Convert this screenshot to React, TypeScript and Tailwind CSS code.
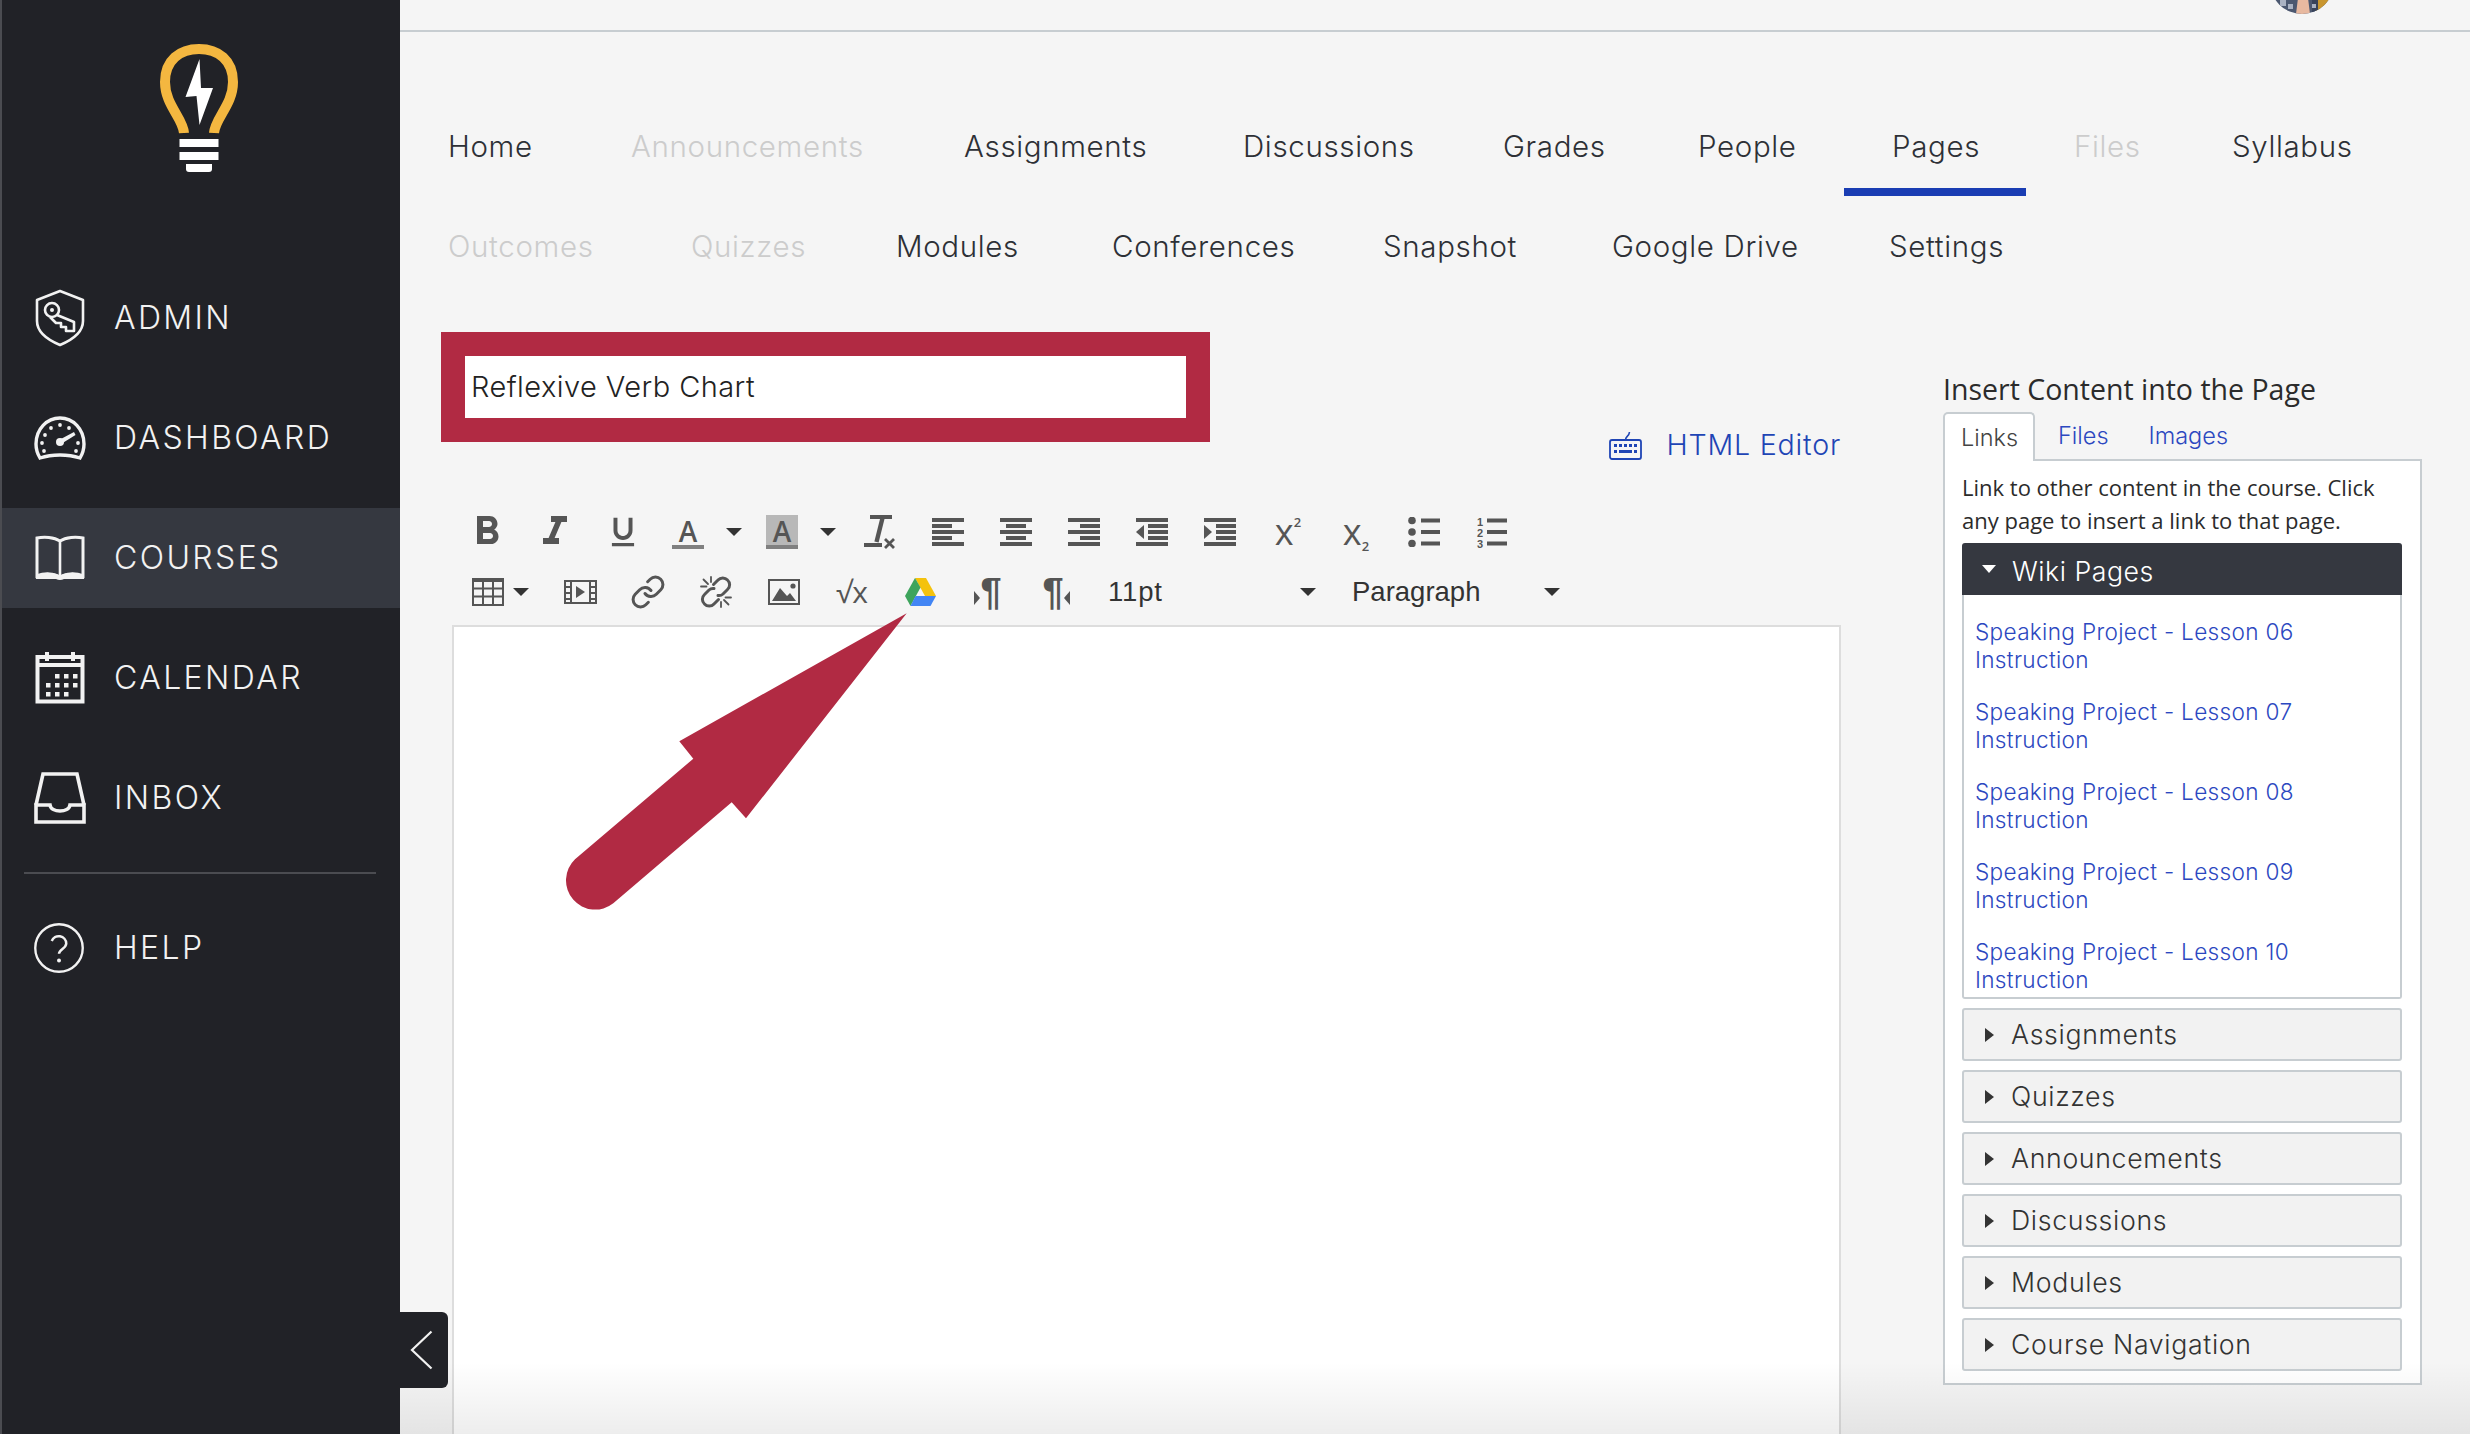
import React from "react";
import { Link } from "lucide-react";
import { MdFormatBold, MdFormatItalic, MdFormatUnderlined } from "react-icons/md";

const navRow1 = [
  { label: "Home", width: "w-[183px]" },
  { label: "Announcements", width: "w-[333px]", disabled: true },
  { label: "Assignments", width: "w-[279px]" },
  { label: "Discussions", width: "w-[260px]" },
  { label: "Grades", width: "w-[195px]" },
  { label: "People", width: "w-[194px]" },
  { label: "Pages", width: "w-[182px]", active: true },
  { label: "Files", width: "w-[158px]", disabled: true },
  { label: "Syllabus", width: "w-[220px]" },
];

const navRow2 = [
  { label: "Outcomes", width: "w-[243px]", disabled: true },
  { label: "Quizzes", width: "w-[205px]", disabled: true },
  { label: "Modules", width: "w-[216px]" },
  { label: "Conferences", width: "w-[271px]" },
  { label: "Snapshot", width: "w-[229px]" },
  { label: "Google Drive", width: "w-[277px]" },
  { label: "Settings", width: "w-[220px]" },
];

const wikiLinks = ["06", "07", "08", "09", "10"];
const accordions = ["Assignments", "Quizzes", "Announcements", "Discussions", "Modules", "Course Navigation"];

const LogoBulb = () => (
  <svg width="80" height="132" viewBox="0 0 80 132" className="block">
    <path
      d="M25 89 C24 74 6 61 6 38 C6 16 21 5 40 5 C59 5 74 16 74 38 C74 61 56 74 55 89"
      fill="none"
      stroke="#f4b740"
      strokeWidth="10"
    />
    <polygon points="40.5,15 26.5,53 37.5,52 40.5,81 54,44 42,44" fill="#fff" />
    <rect x="20.5" y="95" width="39" height="8" fill="#fff" />
    <rect x="20.5" y="108" width="39" height="8" fill="#fff" />
    <path d="M27 120 H53 V125 Q53 128 50 128 H30 Q27 128 27 125 Z" fill="#fff" />
  </svg>
);

const AdminIcon = () => (
  <svg width="52" height="58" viewBox="0 0 52 58" className="block" fill="none" stroke="#f2f2f2">
    <path d="M26 2 L49 11 V32 C49 43 38 51 26 56 C14 51 3 43 3 32 V11 Z" strokeWidth="2.6" strokeLinejoin="round" />
    <circle cx="18" cy="21" r="7" strokeWidth="2.6" />
    <circle cx="18" cy="21" r="2" fill="#f2f2f2" stroke="none" />
    <path d="M23 26 L40 33 V42 H32 V38 H27 V34 H22 L16 28" strokeWidth="2.6" strokeLinejoin="round" />
  </svg>
);

const DashboardIcon = () => (
  <svg width="52" height="44" viewBox="0 0 52 44" className="block" fill="#f2f2f2">
    <path
      d="M6 42 C3 37 2 33 2 28 C2 13 13 2 26 2 C39 2 50 13 50 28 C50 33 49 37 46 42 C34 38 18 38 6 42 Z"
      fill="none"
      stroke="#f2f2f2"
      strokeWidth="3.4"
    />
    <circle cx="26" cy="9" r="1.9" />
    <circle cx="17" cy="12" r="1.9" />
    <circle cx="35" cy="12" r="1.9" />
    <circle cx="11" cy="19" r="1.9" />
    <circle cx="8" cy="27" r="1.9" />
    <circle cx="44" cy="27" r="1.9" />
    <circle cx="10" cy="35" r="1.9" />
    <circle cx="42" cy="35" r="1.9" />
    <circle cx="26" cy="26" r="4" />
    <path d="M25 24 L40 16 L41.5 19 L27 28 Z" />
  </svg>
);

const CoursesIcon = () => (
  <svg width="52" height="46" viewBox="0 0 52 46" className="block" fill="none" stroke="#f2f2f2">
    <path d="M26 6 C20 2 10 1.5 3 3 V41 C10 38 20 38 26 42 C32 38 42 38 49 41 V3 C42 1.5 32 2 26 6 Z" strokeWidth="3" />
    <path d="M26 6 V42" strokeWidth="2.6" />
    <path d="M2 40 V44 H22 Q26 46 30 44 H50 V40 C42 37 32 37 26 41 C20 37 10 37 2 40 Z" fill="#f2f2f2" stroke="none" />
  </svg>
);

const CalendarIcon = () => {
  const dots = [
    [20, 22], [29, 22], [38, 22],
    [11, 31], [20, 31], [29, 31], [38, 31],
    [11, 40], [20, 40], [29, 40],
  ];
  return (
    <svg width="50" height="52" viewBox="0 0 50 52" className="block" fill="#f2f2f2">
      <path d="M2.5 5 H47.5 V49.5 H2.5 Z M2.5 13 H47.5" fill="none" stroke="#f2f2f2" strokeWidth="4" />
      <rect x="10" y="0" width="4" height="9" />
      <rect x="36" y="0" width="4" height="9" />
      {dots.map(([x, y]) => (
        <rect key={`${x}-${y}`} x={x} y={y} width="4.5" height="4.5" />
      ))}
    </svg>
  );
};

const InboxIcon = () => (
  <svg width="52" height="52" viewBox="0 0 52 52" className="block" fill="none" stroke="#f2f2f2" strokeWidth="3.6">
    <path d="M2 33 L9 2 H43 L50 33" />
    <path d="M2 50 V33 H16 C17 41 35 41 36 33 H50 V50 Z" />
  </svg>
);

const HelpIcon = () => (
  <svg width="50" height="50" viewBox="2 2 20 20" className="block" fill="none" stroke="#f2f2f2" strokeWidth="0.95">
    <circle cx="12" cy="12" r="9.5" />
    <path d="M9.1 9.2a3 3 0 0 1 5.8 1c0 2-2.9 2.3-2.9 4.1" strokeWidth="1" />
    <circle cx="12" cy="17" r="0.8" fill="#f2f2f2" stroke="none" />
  </svg>
);

const sideItems = [
  { label: "ADMIN", icon: <AdminIcon /> },
  { label: "DASHBOARD", icon: <DashboardIcon /> },
  { label: "COURSES", icon: <CoursesIcon />, active: true },
  { label: "CALENDAR", icon: <CalendarIcon /> },
  { label: "INBOX", icon: <InboxIcon /> },
];

const Sidebar = () => (
  <aside className="w-[400px] shrink-0 h-full bg-[#212227] border-l-2 border-l-[#4b4c51] flex flex-col text-[#f2f2f2]">
    <div className="h-[268px] pt-[44px] pl-[157px]">
      <LogoBulb />
    </div>
    <div className="flex flex-col gap-[20px]">
      {sideItems.map((item) => (
        <div
          key={item.label}
          className={`h-[100px] flex items-center pl-[32px] ${item.active ? "bg-[#353840]" : ""}`}
        >
          <div className="w-[52px] flex justify-center">{item.icon}</div>
          <span className="ml-[28px] pb-[1px] text-[32px] font-light tracking-[0.075em]">{item.label}</span>
        </div>
      ))}
    </div>
    <div className="h-[2px] bg-[#4b4c51] mt-[24px] ml-[22px] w-[352px]" />
    <div className="h-[100px] mt-[24px] flex items-center pl-[32px]">
      <div className="w-[52px] flex justify-start">
        <HelpIcon />
      </div>
      <span className="ml-[28px] pb-[1px] text-[32px] font-light tracking-[0.075em]">HELP</span>
    </div>
  </aside>
);

const NavRow = ({ items }: { items: typeof navRow1 }) => (
  <div className="flex h-[100px]">
    {items.map((item) => (
      <div
        key={item.label}
        className={`h-full flex items-center pl-[48px] text-[29.5px] font-[350] tracking-[0.022em] border-y-8 border-t-transparent ${item.width} ${
          item.active ? "border-b-[#1a3db3]" : "border-b-transparent"
        } ${item.disabled ? "text-[#cccccc]" : "text-[#2d3036]"}`}
      >
        {item.label}
      </div>
    ))}
  </div>
);

// toolbar cell, fixed width so the icons stay on the 68px grid
const Cell = ({ className, children }: { className: string; children?: React.ReactNode }) => (
  <div className={`h-full flex items-center justify-center shrink-0 ${className}`}>{children}</div>
);

const Caret = () => (
  <span className="block w-0 h-0 border-x-[8px] border-x-transparent border-t-[8px] border-t-[#333333]" />
);

const AlignIcon = ({ xs }: { xs: [number, number][] }) => (
  <svg width="32" height="28" viewBox="0 0 32 28" className="block" fill="#555555">
    {xs.map(([x, w], i) => (
      <rect key={i} x={x} y={i * 6} width={w} height="4" />
    ))}
  </svg>
);

const IndentIcon = ({ out }: { out?: boolean }) => (
  <svg width="32" height="28" viewBox="0 0 32 28" className="block" fill="#555555">
    <rect x="0" y="0" width="32" height="4" />
    <rect x="12" y="6" width="20" height="4" />
    <rect x="12" y="12" width="20" height="4" />
    <rect x="12" y="18" width="20" height="4" />
    <rect x="0" y="24" width="32" height="4" />
    {out ? <polygon points="8,7 8,21 0,14" /> : <polygon points="0,7 0,21 8,14" />}
  </svg>
);

const ClearIcon = () => (
  <svg width="32" height="34" viewBox="0 0 32 34" className="block" fill="#555555" stroke="#555555">
    <rect x="6" y="0" width="22" height="4" stroke="none" />
    <path d="M18.5 3 L12.5 27" strokeWidth="4.4" fill="none" />
    <rect x="0" y="28" width="18" height="4" stroke="none" />
    <path d="M21 24 L30 33 M30 24 L21 33" strokeWidth="2.8" fill="none" />
  </svg>
);

const BulletIcon = () => (
  <svg width="32" height="30" viewBox="0 0 32 30" className="block" fill="#555555">
    {[3.5, 15, 26.5].map((y) => (
      <g key={y}>
        <circle cx="4" cy={y} r="3.8" />
        <rect x="13" y={y - 2} width="19" height="4" />
      </g>
    ))}
  </svg>
);

const NumberIcon = () => (
  <div className="relative w-[30px] h-[30px]">
    <div className="w-[8px] flex flex-col text-[11px] leading-[11px] font-bold text-[#555555] font-['Liberation_Sans',sans-serif]">
      <span>1</span>
      <span>2</span>
      <span>3</span>
    </div>
    <svg width="20" height="30" viewBox="0 0 20 30" className="absolute left-[10px] top-0 block" fill="#555555">
      {[1.5, 13, 24.5].map((y) => (
        <rect key={y} x="0" y={y} width="20" height="4" />
      ))}
    </svg>
  </div>
);

const TableIcon = () => (
  <svg width="32" height="28" viewBox="0 0 32 28" className="block" fill="none" stroke="#555555" strokeWidth="2">
    <rect x="1" y="1" width="30" height="26" />
    <rect x="0" y="0" width="32" height="4" fill="#555555" stroke="none" />
    <path d="M11 3 V27 M21 3 V27 M1 10.5 H31 M1 18.5 H31" />
  </svg>
);

const MediaIcon = () => (
  <svg width="33" height="24" viewBox="0 0 33 24" className="block" fill="#555555">
    <path d="M0 0 H33 V24 H0 Z M2 2 V6 H6 V2 Z M2 8 V12 H6 V8 Z M2 14 V18 H6 V14 Z M2 20 V22 H6 V20 Z M27 2 V6 H31 V2 Z M27 8 V12 H31 V8 Z M27 14 V18 H31 V14 Z M27 20 V22 H31 V20 Z M8 2 V22 H25 V2 Z" fillRule="evenodd" />
    <polygon points="12,6 21,12 12,18" />
  </svg>
);

const UnlinkIcon = () => (
  <svg width="32" height="32" viewBox="0 0 32 32" className="block" fill="none" stroke="#555555" strokeLinecap="round">
    <path d="M13.5 8.5 L18 4 a6.4 6.4 0 0 1 9.5 0 a6.4 6.4 0 0 1 0 9.5 L23 18 a6 6 0 0 1 -5 1.5" strokeWidth="3" />
    <path d="M18.5 23.5 L14 28 a6.4 6.4 0 0 1 -9.5 0 a6.4 6.4 0 0 1 0 -9.5 L9 14 a6 6 0 0 1 5 -1.5" strokeWidth="3" />
    <path d="M1 10.5 H6.5 M3.5 3.5 L8 8 M11 1 V6 M31 21.5 H25.5 M28.5 28.5 L24 24 M21 31 V26" strokeWidth="1.8" />
  </svg>
);

const ImageIcon = () => (
  <svg width="32" height="26" viewBox="0 0 32 26" className="block" fill="#555555">
    <path d="M0 0 H32 V26 H0 Z M2 2 V24 H30 V2 Z" fillRule="evenodd" />
    <polygon points="4,22 12,9 19,17 22,14 28,22" />
    <circle cx="25" cy="7" r="2.6" />
  </svg>
);

const DriveIcon = () => (
  <svg width="31" height="28" viewBox="0 0 31 28" className="block">
    <polygon points="10,0 21,0 31,18 20,18" fill="#f4c20d" />
    <polygon points="10,0 15.5,9.5 5.5,28 0,18" fill="#3da45c" />
    <polygon points="10.5,18 31,18 25.5,28 5.5,28" fill="#4285f4" />
  </svg>
);

const PilcrowIcon = ({ rtl }: { rtl?: boolean }) => (
  <div className={`h-[38px] flex items-end gap-[0px] ${rtl ? "flex-row-reverse" : ""}`}>
    <span className={`block w-0 h-0 mb-[6px] border-y-[7px] border-y-transparent ${rtl ? "border-r-[6px] border-r-[#555555]" : "border-l-[6px] border-l-[#555555]"}`} />
    <span className="text-[#555555] text-[38px] leading-[38px] font-bold font-['Liberation_Sans',sans-serif]">¶</span>
  </div>
);

const KeyboardIcon = () => (
  <svg width="33" height="29" viewBox="0 0 33 29" className="block" fill="#1f45b5">
    <rect x="1" y="9" width="31" height="19" rx="2" fill="none" stroke="#1f45b5" strokeWidth="1.8" />
    <path d="M16.5 9 C16.5 5 20 6 20.5 1" fill="none" stroke="#1f45b5" strokeWidth="1.6" />
    {[6, 11, 16, 21, 26].map((x) => (
      <rect key={x} x={x - 1} y="13" width="3" height="3" />
    ))}
    <rect x="5" y="19" width="3" height="3" />
    <rect x="10" y="19" width="13" height="3" />
    <rect x="25" y="19" width="3" height="3" />
  </svg>
);

const EditorToolbar = () => (
  <div className="ml-[12px] flex flex-col">
    <div className="h-[60px] flex items-center">
      <Cell className="w-[68px]">
        <MdFormatBold size={48} color="#555555" />
      </Cell>
      <Cell className="w-[68px]">
        <MdFormatItalic size={48} color="#555555" />
      </Cell>
      <Cell className="w-[68px]">
        <MdFormatUnderlined size={38} color="#555555" />
      </Cell>
      <Cell className="w-[62px]">
        <span className="w-[32px] h-[34px] border-b-4 border-b-[#808080] flex justify-center text-[#555555] text-[28px] leading-[32px] font-semibold font-['Open_Sans',sans-serif]">
          A
        </span>
      </Cell>
      <Cell className="w-[30px]">
        <Caret />
      </Cell>
      <Cell className="w-[66px]">
        <span className="w-[32px] h-[34px] bg-[#b8b8b8] border-b-4 border-b-[#808080] flex justify-center text-[#555555] text-[28px] leading-[32px] font-semibold font-['Open_Sans',sans-serif]">
          A
        </span>
      </Cell>
      <Cell className="w-[31px] !justify-start pl-[5px]">
        <Caret />
      </Cell>
      <Cell className="w-[68px]">
        <ClearIcon />
      </Cell>
      <Cell className="w-[68px]">
        <AlignIcon xs={[[0, 32], [0, 20], [0, 32], [0, 20], [0, 32]]} />
      </Cell>
      <Cell className="w-[68px]">
        <AlignIcon xs={[[0, 32], [6, 20], [0, 32], [6, 20], [0, 32]]} />
      </Cell>
      <Cell className="w-[68px]">
        <AlignIcon xs={[[0, 32], [12, 20], [0, 32], [12, 20], [0, 32]]} />
      </Cell>
      <Cell className="w-[68px]">
        <IndentIcon out />
      </Cell>
      <Cell className="w-[68px]">
        <IndentIcon />
      </Cell>
      <Cell className="w-[68px]">
        <span className="text-[#555555] text-[36px] leading-none font-['Open_Sans',sans-serif]">
          x<sup className="text-[13px] font-semibold -top-[18px]">2</sup>
        </span>
      </Cell>
      <Cell className="w-[68px]">
        <span className="text-[#555555] text-[36px] leading-none font-['Open_Sans',sans-serif]">
          x<sub className="text-[13px] font-semibold -bottom-[6px]">2</sub>
        </span>
      </Cell>
      <Cell className="w-[68px]">
        <BulletIcon />
      </Cell>
      <Cell className="w-[68px]">
        <NumberIcon />
      </Cell>
    </div>
    <div className="h-[60px] flex items-center">
      <Cell className="w-[93px] !justify-start pl-[19px] gap-[9px]">
        <TableIcon />
        <Caret />
      </Cell>
      <Cell className="w-[68px]">
        <MediaIcon />
      </Cell>
      <Cell className="w-[68px]">
        <Link size={36} color="#555555" strokeWidth={2} />
      </Cell>
      <Cell className="w-[68px]">
        <UnlinkIcon />
      </Cell>
      <Cell className="w-[68px]">
        <ImageIcon />
      </Cell>
      <Cell className="w-[68px]">
        <span className="text-[#555555] text-[30px] leading-none font-['Open_Sans',sans-serif]">√x</span>
      </Cell>
      <Cell className="w-[68px]">
        <DriveIcon />
      </Cell>
      <Cell className="w-[68px]">
        <PilcrowIcon />
      </Cell>
      <Cell className="w-[68px]">
        <PilcrowIcon rtl />
      </Cell>
      <Cell className="w-[226px] !justify-between pl-[18px] text-[27.5px] tracking-[0.03em] text-[#333333] font-['Liberation_Sans',sans-serif]">
        <span>11pt</span>
        <Caret />
      </Cell>
      <Cell className="w-[208px] ml-[36px] !justify-between text-[27.5px] text-[#333333] font-['Liberation_Sans',sans-serif]">
        <span>Paragraph</span>
        <Caret />
      </Cell>
    </div>
  </div>
);

const ContentPanel = () => (
  <div className="w-[479px] ml-[102px] pt-[75px] shrink-0">
    <h2 className="h-[36px] leading-[36px] text-[28.5px] text-[#2b2b2b] font-['Open_Sans',sans-serif]">
      Insert Content into the Page
    </h2>
    <div className="mt-[5px] h-[49px] flex items-start border-b-2 border-b-[#c7cdd1] text-[23.5px] font-[350]">
      <div className="w-[92px] h-[49px] bg-white border-2 border-b-0 border-[#c7cdd1] rounded-t-[5px] pl-[16px] pt-[6px] text-[#444444]">
        Links
      </div>
      <div className="ml-[23px] pt-[6px] text-[#2c48c0]">Files</div>
      <div className="ml-[40px] pt-[6px] text-[#2c48c0]">Images</div>
    </div>
    <div className="bg-white border-2 border-t-0 border-[#c7cdd1] pl-[17px] pr-[18px] pt-[10px] pb-[7px] h-[924px]">
      <p className="h-[66px] text-[22px] leading-[32.5px] text-[#2b2b2b] font-['Open_Sans',sans-serif]">
        Link to other content in the course. Click any page to insert a link to that page.
      </p>
      <div className="mt-[6px] h-[52px] bg-[#353840] rounded-t-[3px] flex items-center pl-[20px] text-white text-[26.7px] font-[350] tracking-[0.02em]">
        <span className="w-0 h-0 border-x-[7px] border-x-transparent border-t-[8px] border-t-white" />
        <span className="ml-[16px] pt-[4px]">Wiki Pages</span>
      </div>
      <div className="h-[404px] border-2 border-t-0 border-[#c7cdd1] rounded-b-[3px] pl-[11px] pt-[23px] flex flex-col gap-[24px]">
        {wikiLinks.map((n) => (
          <div key={n} className="h-[56px] text-[22.6px] leading-[28px] font-[350] tracking-[0.014em] text-[#2c48c0]">
            <div>Speaking Project - Lesson {n}</div>
            <div>Instruction</div>
          </div>
        ))}
      </div>
      <div className="mt-[9px] flex flex-col gap-[9px]">
        {accordions.map((name) => (
          <div
            key={name}
            className="h-[53px] bg-[#f2f2f2] border-2 border-[#c7cdd1] rounded-[3px] flex items-center pl-[21px] text-[26.7px] font-[350] tracking-[0.025em] text-[#333333]"
          >
            <span className="w-0 h-0 border-y-[7.5px] border-y-transparent border-l-[9px] border-l-[#333333]" />
            <span className="ml-[17px]">{name}</span>
          </div>
        ))}
      </div>
    </div>
  </div>
);

export default function App() {
  return (
    <div className="w-[2470px] h-[1434px] flex overflow-hidden bg-[#f5f5f5] font-['Inter','Noto_Sans',sans-serif]">
      <Sidebar />
      <main className="relative flex-1 min-w-0 h-full flex flex-col">
        <div className="h-[32px] shrink-0 border-b-2 border-b-[#c7cdd1] flex justify-end pr-[136px] overflow-hidden">
          <svg width="64" height="64" viewBox="0 0 64 64" className="block -mt-[50px] rounded-full">
            <rect width="64" height="64" fill="#4c5870" />
            <rect x="46" width="18" height="64" fill="#c9962f" />
            <rect x="42" y="50" width="6" height="14" fill="#38435a" />
            <rect x="10" y="50" width="6" height="6" fill="#aab2c2" />
            <rect x="18" y="54" width="5" height="5" fill="#aab2c2" />
            <rect x="42" y="54" width="4" height="4" fill="#aab2c2" />
            <polygon points="26,64 40,64 38,48 28,48" fill="#e8b9a0" />
          </svg>
        </div>
        <nav className="pt-[64px] shrink-0">
          <NavRow items={navRow1} />
          <NavRow items={navRow2} />
        </nav>
        <div className="flex flex-1 min-h-0 pl-[41px]">
          <div className="w-[1400px] shrink-0 flex flex-col">
            <div className="mt-[36px] h-[128px] shrink-0 flex justify-between items-start">
              <div className="w-[769px] h-[110px] bg-[#b12a43] px-[24px] pt-[24px]">
                <div className="h-[62px] bg-white flex items-center pl-[6px] text-[29px] font-light tracking-[0.015em] text-[#222222]">
                  Reflexive Verb Chart
                </div>
              </div>
              <div className="self-end h-[30px] flex items-center gap-[24px] text-[28.6px] font-[350] tracking-[0.028em] text-[#1f45b5]">
                <KeyboardIcon />
                <span>HTML Editor</span>
              </div>
            </div>
            <div className="mt-[42px] shrink-0">
              <EditorToolbar />
            </div>
            <div className="relative flex-1 ml-[11px] mt-[3px] bg-white border-2 border-b-0 border-[#dddddd]">
              <svg width="350" height="300" viewBox="0 0 350 300" className="absolute left-[106px] -top-[17px]">
                <path
                  d="M346.7 3.3 L119.3 131.3 L133.3 148.7 L15 249.3 A29.2 29.2 0 0 0 53.3 293.3 L171.7 192.3 L186 208.3 Z"
                  fill="#b12a43"
                />
              </svg>
            </div>
          </div>
          <ContentPanel />
        </div>
        <div className="absolute left-0 right-0 bottom-0 h-[72px] bg-gradient-to-b from-transparent to-black/[0.07] pointer-events-none" />
        <div className="absolute left-0 top-[1312px] w-[48px] h-[76px] bg-[#212227] rounded-r-[6px] flex items-center justify-center pr-[4px]">
          <svg width="24" height="40" viewBox="0 0 24 40" fill="none" stroke="#f2f2f2" strokeWidth="2.2" className="block">
            <path d="M21.5 1.5 L2 20 L21.5 38.5" />
          </svg>
        </div>
      </main>
    </div>
  );
}
